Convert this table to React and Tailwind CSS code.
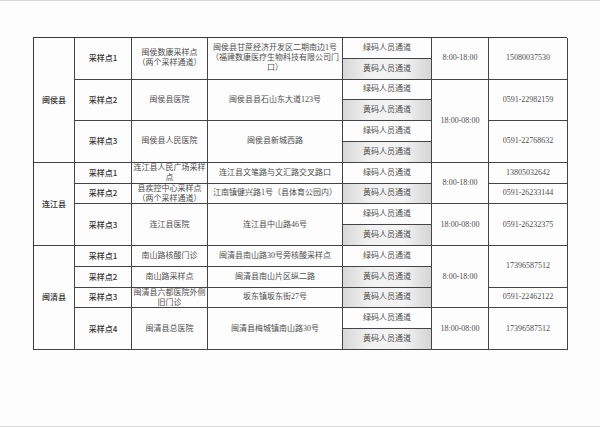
import React from 'react';

const spanClass = {
  1: 'row-span-1',
  2: 'row-span-2',
  3: 'row-span-3',
  4: 'row-span-4',
  5: 'row-span-5',
  6: 'row-span-6',
};

const GREEN = '绿码人员通道';
const YELLOW = '黄码人员通道';

// each column is listed top to bottom; the grid flows by column
const columns = [
  {
    bold: true,
    cells: [['闽侯县', 6], ['连江县', 4], ['闽清县', 5]],
  },
  {
    bold: true,
    cells: [
      ['采样点1', 2], ['采样点2', 2], ['采样点3', 2],
      ['采样点1', 1], ['采样点2', 1], ['采样点3', 2],
      ['采样点1', 1], ['采样点2', 1], ['采样点3', 1], ['采样点4', 2],
    ],
  },
  {
    cells: [
      [['闽侯数康采样点', '（两个采样通道）'], 2],
      ['闽侯县医院', 2],
      ['闽侯县人民医院', 2],
      [['连江县人民广场采样', '点'], 1],
      [['县疾控中心采样点', '（两个采样通道）'], 1],
      ['连江县医院', 2],
      ['南山路核酸门诊', 1],
      ['南山路采样点', 1],
      [['闽清县六都医院外侧', '旧门诊'], 1],
      ['闽清县总医院', 2],
    ],
  },
  {
    cells: [
      [['闽侯县甘蔗经济开发区二期南边1号', '（福建数康医疗生物科技有限公司门', '口）'], 2],
      ['闽侯县县石山东大道123号', 2],
      ['闽侯县新城西路', 2],
      ['连江县文笔路与文汇路交叉路口', 1],
      ['江南镇健兴路1号（县体育公园内）', 1],
      ['连江县中山路46号', 2],
      ['闽清县南山路30号旁核酸采样点', 1],
      ['闽清县南山片区纵二路', 1],
      ['坂东镇坂东街27号', 1],
      ['闽清县梅城镇南山路30号', 2],
    ],
  },
  {
    channel: true,
    cells: [
      GREEN, YELLOW, GREEN, YELLOW, GREEN, YELLOW,
      GREEN, YELLOW, GREEN, YELLOW,
      GREEN, YELLOW, YELLOW, GREEN, YELLOW,
    ].map((t) => [t, 1]),
  },
  {
    cells: [
      ['8:00-18:00', 2], ['18:00-08:00', 4],
      ['8:00-18:00', 2], ['18:00-08:00', 2],
      ['8:00-18:00', 3], ['18:00-08:00', 2],
    ],
  },
  {
    cells: [
      ['15080037530', 2], ['0591-22982159', 2], ['0591-22768632', 2],
      ['13805032642', 1], ['0591-26233144', 1], ['0591-26232375', 2],
      ['17396587512', 2], ['0591-22462122', 1], ['17396587512', 2],
    ],
  },
];

function Cell({ text, span, bold, shaded }) {
  const lines = Array.isArray(text) ? text : [text];
  return (
    <div
      className={`${spanClass[span]} flex flex-col items-center justify-center border-r border-b border-[#444] px-[2px] text-center leading-[10px] ${
        bold
          ? 'font-["Noto_Sans_CJK_SC",sans-serif] font-medium text-[#333]'
          : 'font-["Liberation_Serif","Noto_Sans_CJK_SC",serif] font-normal text-[#4d4d4d]'
      } ${shaded ? 'bg-[linear-gradient(90deg,#d8d8d8,#f1f1f1_30%,#f3f3f3_70%,#d4d4d4)]' : ''}`}
    >
      {lines.map((l, i) => (
        <span key={i} className="whitespace-nowrap">{l}</span>
      ))}
    </div>
  );
}

export default function App() {
  return (
    <div className="w-[600px] h-[427px] overflow-hidden bg-[#fdfdfd] border-t border-b border-[#d8d8d8] pt-[36px] pl-[33px]">
      <div className="grid grid-flow-col grid-rows-15 grid-cols-[41px_57px_76px_135px_89px_57px_79px] w-[534px] h-[313px] border-t border-l border-[#3a3a3a] text-[8px]">
        {columns.map((col, ci) =>
          col.cells.map(([text, span], ri) => (
            <Cell
              key={`${ci}-${ri}`}
              text={text}
              span={span}
              bold={col.bold}
              shaded={col.channel && text === YELLOW}
            />
          ))
        )}
      </div>
    </div>
  );
}
